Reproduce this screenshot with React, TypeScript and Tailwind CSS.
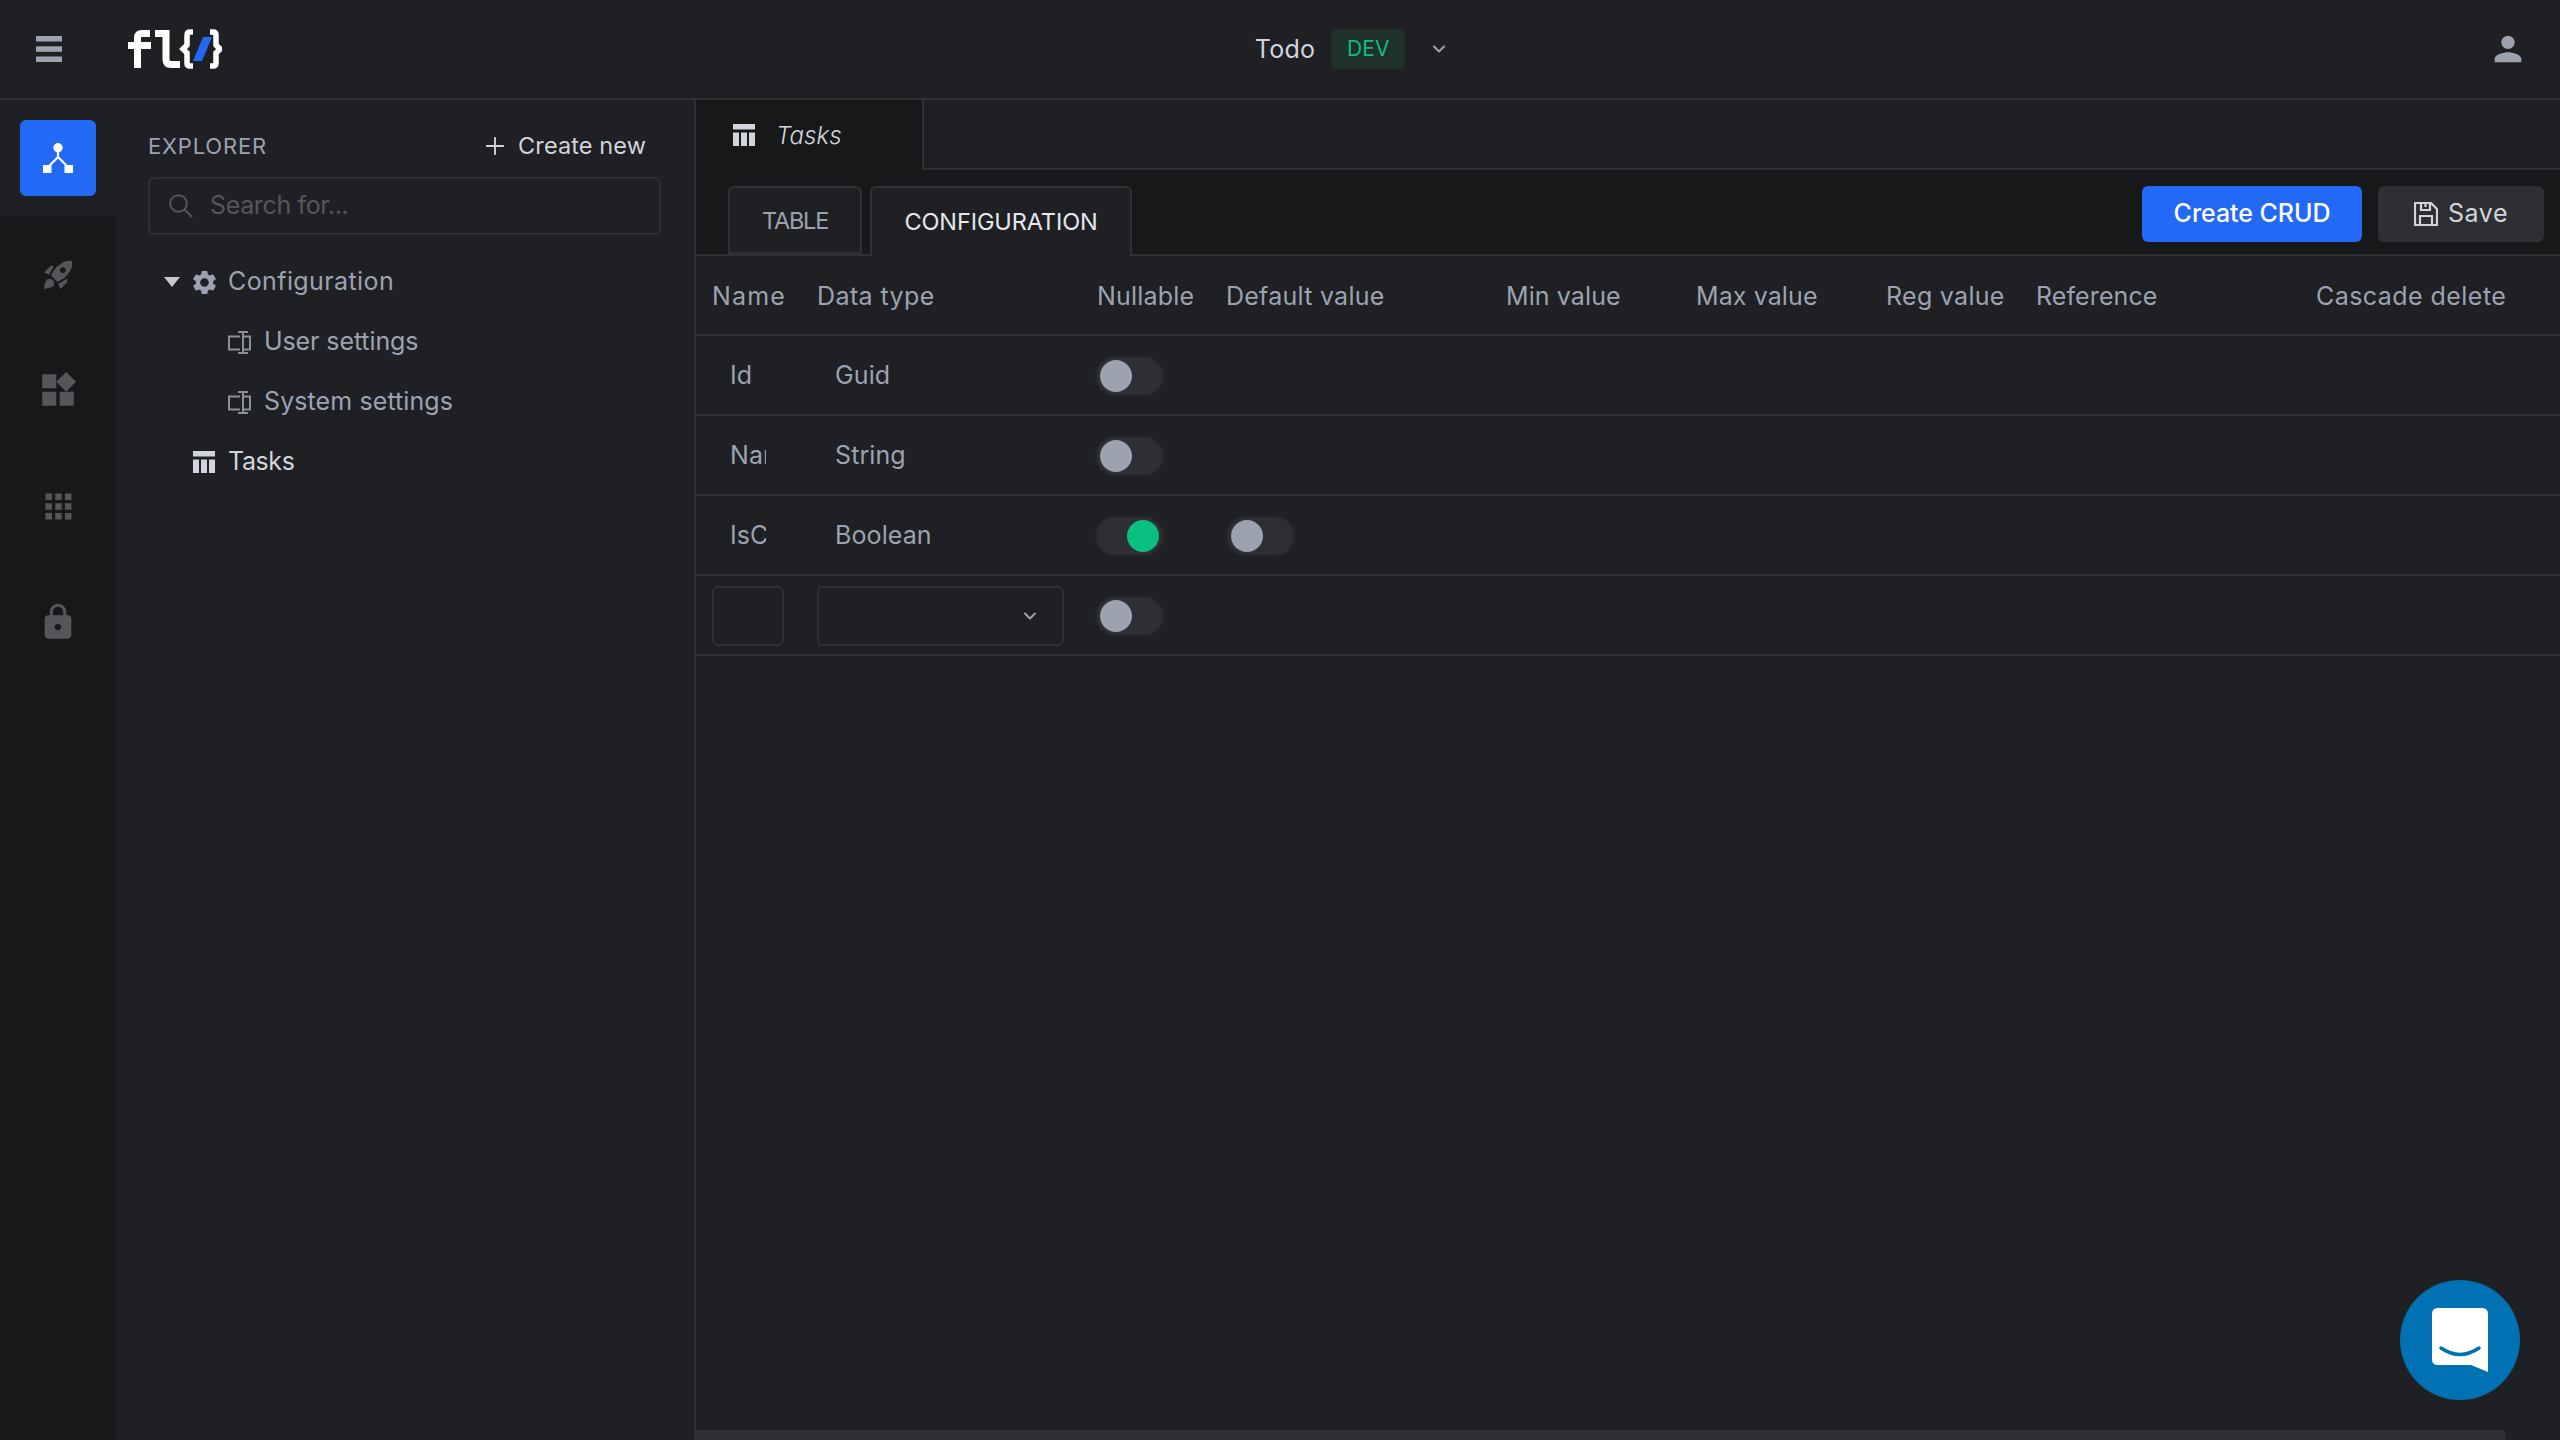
import React from "react";
import { MdRocketLaunch, MdWidgets, MdApps, MdLock, MdPerson, MdSettings } from "react-icons/md";
import { Plus, ChevronDown } from "lucide-react";

const font = { fontFamily: "Inter, 'Liberation Sans', sans-serif" };

function TableIcon({ className }: { className?: string }) {
  return (
    <svg viewBox="0 0 22 22" className={className} fill="currentColor">
      <rect x="0" y="0" width="22" height="5.500" />
      <rect x="0" y="8.500" width="6" height="13.500" />
      <rect x="8" y="8.500" width="6" height="13.500" />
      <rect x="16" y="8.500" width="6" height="13.500" />
    </svg>
  );
}

function FieldIcon() {
  return (
    <svg viewBox="0 0 23 23" className="w-[23px] h-[23px] text-[#8b8f96]" fill="none" stroke="currentColor" strokeWidth="2">
      <path d="M12 5.500H1V18.500H12" />
      <path d="M15 1V22" />
      <path d="M10 1H20M10 22H20" />
      <path d="M15 5.500H22V18.500H15" />
    </svg>
  );
}

function SaveIcon() {
  return (
    <svg viewBox="0 0 24 24" className="w-[24px] h-[24px] mr-[10px]" fill="none" stroke="currentColor" strokeWidth="2.200">
      <path d="M1 1H17L23 7V23H1Z" />
      <path d="M7 1V8H16V1" />
      <path d="M11.500 1V5" />
      <path d="M6 23V14H18V23" />
    </svg>
  );
}

function Logo() {
  return (
    <svg viewBox="0 0 94 40" className="w-[94px] h-[40px]" fill="none">
      <path d="M22 4.500H14Q9.500 4.500 9.500 9V39M0 16.500H23" stroke="#fff" strokeWidth="7" />
      <path d="M27 4.500H38V30Q38 35.500 43 35.500H52" stroke="#fff" strokeWidth="7" />
      <path d="M65 3H62Q59 3 59 6V16L55 20L59 24V34Q59 37 62 37H65" stroke="#fff" strokeWidth="5.500" />
      <path d="M75 8H84L74 32H65Z" fill="#2269f6" />
      <path d="M82 3H85Q88 3 88 6V16L92 20L88 24V34Q88 37 85 37H82" stroke="#fff" strokeWidth="5.500" />
    </svg>
  );
}

function Toggle({ on = false }: { on?: boolean }) {
  return (
    <div className={`w-[69px] h-[40px] rounded-full bg-[#2e2f34] border-2 border-[#28292d] flex items-center px-[3px] ${on ? "justify-end" : "justify-start"}`}>
      <div className={`w-[32px] h-[32px] rounded-full shrink-0 ${on ? "bg-[#0abf7f]" : "bg-[#9ca3af]"}`} />
    </div>
  );
}

const headers: [string, string][] = [
  ["Name", "w-[105px] tracking-[1.2px]"],
  ["Data type", "w-[280px] tracking-[0.4px]"],
  ["Nullable", "w-[129px] tracking-[0.2px]"],
  ["Default value", "w-[280px] tracking-[0.25px]"],
  ["Min value", "w-[190px]"],
  ["Max value", "w-[190px]"],
  ["Reg value", "w-[150px] tracking-[0.3px]"],
  ["Reference", "w-[280px]"],
  ["Cascade delete", "w-[220px] tracking-[0.45px]"],
];

function Row({ name, type, nullable, extra }: { name: string; type: string; nullable?: boolean; extra?: boolean }) {
  return (
    <div className="flex items-center h-[80px] pt-[2px] border-b-2 border-[#2e3035] pl-[16px] shrink-0">
      <div className="w-[105px] pl-[18px]">
        <div className="w-[36px] overflow-hidden whitespace-nowrap text-[#9ca3af]">{name}</div>
      </div>
      <div className="w-[280px] pl-[18px] text-[#9ca3af]">{type}</div>
      <div className="w-[129px] -ml-[2px] mr-[2px]"><Toggle on={nullable} /></div>
      {extra && <div><Toggle /></div>}
    </div>
  );
}

export default function App() {
  return (
    <div style={font} className="w-[2560px] h-[1440px] bg-[#1e2024] flex flex-col overflow-hidden text-[25px] tracking-[0.1px] text-[#d1d5db]">
      <header className="h-[100px] shrink-0 border-b-2 border-[#2e3035] flex items-center pl-[36px] pr-[32px]">
        <svg viewBox="0 0 26 26" className="w-[26px] h-[26px] text-[#9ca3af]" fill="currentColor">
          <rect y="0" width="26" height="5.500" />
          <rect y="10.300" width="26" height="5.500" />
          <rect y="20.500" width="26" height="5.500" />
        </svg>
        <div className="ml-[66px]"><Logo /></div>
        <div className="flex-1 flex items-center justify-center pr-[6px]">
          <span className="text-[#d1d5db] text-[25px] pt-[2px] tracking-[0.3px]">Todo</span>
          <span className="ml-[16px] w-[74px] h-[40px] rounded-[6px] bg-[#1f3129] text-[#0abf7f] text-[21px] flex items-center justify-center">DEV</span>
          <ChevronDown className="ml-[24px] w-[20px] h-[20px] text-[#9ca3af]" strokeWidth={2.4} />
        </div>
        <MdPerson className="w-[40px] h-[40px] text-[#9ca3af]" />
      </header>

      <div className="flex-1 flex min-h-0">
        <nav className="w-[116px] shrink-0 flex flex-col bg-[#17181a]">
          <div className="h-[116px] bg-[#1e2024] pt-[20px] pl-[20px] shrink-0">
            <div className="w-[76px] h-[76px] rounded-[6px] bg-[#2269f6] flex items-center justify-center">
              <svg viewBox="0 0 30 30" className="w-[30px] h-[30px]" fill="#fff" stroke="none">
                <circle cx="15" cy="4.700" r="4.700" />
                <path d="M15 8V14L4 25M15 14L26 25" stroke="#fff" strokeWidth="2.200" fill="none" />
                <rect x="0" y="22" width="8.500" height="8" />
                <rect x="21.500" y="22" width="8.500" height="8" />
              </svg>
            </div>
          </div>
          <div className="flex flex-col items-center text-[#55565a]">
            <div className="h-[116px] flex items-center justify-center"><MdRocketLaunch className="w-[35px] h-[35px]" /></div>
            <div className="h-[116px] flex items-center justify-center"><MdWidgets className="w-[42px] h-[42px]" /></div>
            <div className="h-[116px] flex items-center justify-center"><MdApps className="w-[39px] h-[39px]" /></div>
            <div className="h-[116px] flex items-center justify-center"><MdLock className="w-[40px] h-[40px]" /></div>
          </div>
        </nav>

        <aside className="w-[580px] shrink-0 border-r-2 border-[#2e3035] pt-[30px] flex flex-col">
          <div className="flex items-center justify-between pl-[32px] pr-[48px] h-[32px]">
            <span className="text-[22px] tracking-[0.8px] text-[#9ca3af]">EXPLORER</span>
            <span className="flex items-center text-[#d1d5db] text-[23.500px]">
              <Plus className="w-[28px] h-[28px] mr-[9px]" strokeWidth={1.6} />
              Create new
            </span>
          </div>
          <div className="ml-[32px] mt-[15px] w-[513px] h-[58px] border-2 border-[#2e3035] rounded-[6px] flex items-center pl-[19px] text-[#55565a] shrink-0">
            <svg viewBox="0 0 24 24" className="w-[24px] h-[24px]" fill="none" stroke="currentColor" strokeWidth="2">
              <circle cx="9.500" cy="9.500" r="8.300" />
              <path d="M15.500 15.500L23 23" />
            </svg>
            <span className="ml-[17px] tracking-[-0.35px]">Search for...</span>
          </div>
          <div className="mt-[17px] flex flex-col text-[#9ca3af]">
            <div className="h-[60px] flex items-center pl-[48px]">
              <svg viewBox="0 0 16 10" className="w-[16px] h-[10px] text-[#c4c8ce]" fill="currentColor">
                <path d="M0 0H16L8 10Z" />
              </svg>
              <MdSettings className="w-[29px] h-[29px] ml-[9.500px] text-[#9ca3af]" />
              <span className="ml-[9.500px] tracking-[0.4px]">Configuration</span>
            </div>
            <div className="h-[60px] flex items-center pl-[112px]">
              <FieldIcon />
              <span className="ml-[13px] tracking-[-0.1px]">User settings</span>
            </div>
            <div className="h-[60px] flex items-center pl-[112px]">
              <FieldIcon />
              <span className="ml-[13px]">System settings</span>
            </div>
            <div className="h-[60px] flex items-center pl-[77px] text-[#d1d5db]">
              <TableIcon className="w-[22px] h-[22px]" />
              <span className="ml-[13px] tracking-[-0.4px]">Tasks</span>
            </div>
          </div>
        </aside>

        <main className="flex-1 flex flex-col min-w-0 overflow-hidden">
          <div className="h-[70px] shrink-0 flex">
            <div className="w-[228px] bg-[#17181a] border-r-2 border-[#2e3035] flex items-center pl-[37px] text-[#d1d5db]">
              <TableIcon className="w-[22px] h-[22px]" />
              <span className="ml-[21px] mt-[2px] italic font-light text-[24px]">Tasks</span>
            </div>
            <div className="flex-1 border-b-2 border-[#2e3035]" />
          </div>

          <div className="h-[86px] shrink-0 bg-[#17181a] border-b-2 border-[#2e3035] flex pl-[32px] pr-[16px]">
            <div className="flex items-start pt-[16px] gap-[8px]">
              <div className="w-[134px] h-[68px] pt-[2px] bg-[#1e2024] border-2 border-[#2e3035] rounded-t-[6px] flex items-center justify-center text-[#9ca3af] text-[23.500px] tracking-[-1.2px]">TABLE</div>
              <div className="w-[262px] h-[70px] bg-[#1e2024] border-2 border-b-0 border-[#2e3035] rounded-t-[6px] flex items-center justify-center text-[#e5e7eb] text-[23.500px] tracking-[-0.1px] relative z-10">CONFIGURATION</div>
            </div>
            <div className="flex-1" />
            <div className="flex items-start pt-[16px] gap-[16px]">
              <button className="w-[220px] h-[56px] rounded-[6px] bg-[#2269f6] text-white text-[25px] font-medium tracking-[-0.05px]">Create CRUD</button>
              <button className="w-[166px] h-[56px] rounded-[6px] bg-[#2e2f34] text-[#d1d5db] text-[25px] tracking-[0.6px] flex items-center justify-center">
                <SaveIcon />
                Save
              </button>
            </div>
          </div>

          <div className="flex-1 flex flex-col min-h-0 -mt-[2px]">
            <div className="h-[82px] shrink-0 pt-[5px] border-b-2 border-[#2e3035] flex items-center pl-[16px] text-[#9ca3af] whitespace-nowrap">
              {headers.map(([h, w]) => (
                <div key={h} className={w}>{h}</div>
              ))}
            </div>
            <Row name="Id" type="Guid" />
            <Row name="Name" type="String" />
            <Row name="IsCompleted" type="Boolean" nullable extra />
            <div className="flex items-center h-[80px] pt-[2px] border-b-2 border-[#2e3035] pl-[16px] shrink-0">
              <div className="w-[105px]"><div className="w-[72px] h-[60px] border-2 border-[#2e3035] rounded-[6px]" /></div>
              <div className="w-[280px]">
                <div className="w-[247px] h-[60px] border-2 border-[#2e3035] rounded-[6px] flex items-center justify-end pr-[22px]">
                  <ChevronDown className="w-[20px] h-[20px] text-[#9ca3af]" strokeWidth={2.4} />
                </div>
              </div>
              <div className="-ml-[2px]"><Toggle /></div>
            </div>
            <div className="flex-1" />
            <div className="flex h-[10px] shrink-0">
              <div className="w-[1810px] h-[10px] rounded-r-[5px] bg-[#2e2f34]" />
            </div>
          </div>
        </main>
      </div>

      <button className="fixed left-[2400px] top-[1280px] w-[120px] h-[120px] rounded-full bg-[#0071b2] flex items-center justify-center">
        <svg viewBox="0 0 56 64" className="w-[56px] h-[64px]">
          <path d="M6 0H50Q56 0 56 6V64L39 57H6Q0 57 0 51V6Q0 0 6 0Z" fill="#fff" />
          <path d="M9 40Q28 53 47 40" stroke="#0071b2" strokeWidth="3.500" fill="none" strokeLinecap="round" />
        </svg>
      </button>
    </div>
  );
}
